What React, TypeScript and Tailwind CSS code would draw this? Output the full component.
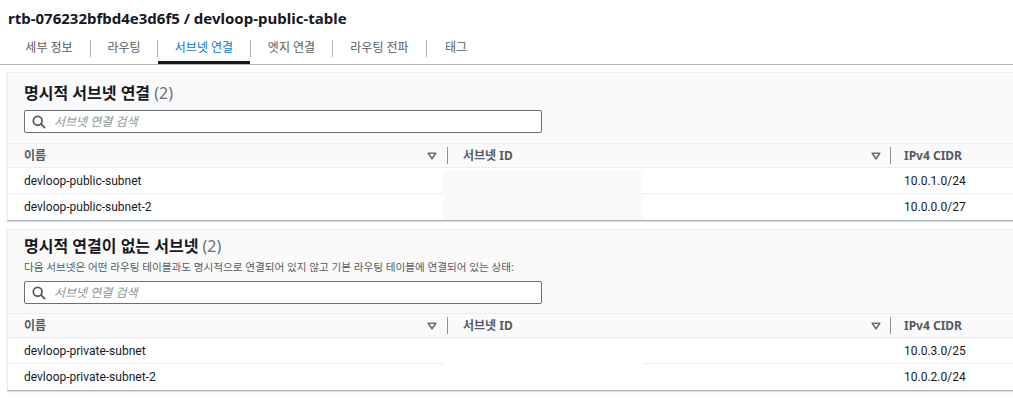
import React from "react";

const FONT = { fontFamily: '"Noto Sans", "Noto Sans CJK KR", sans-serif' };

function SortIcon() {
  return (
    <svg width="10" height="8" viewBox="0 0 10 8" className="shrink-0">
      <path d="M1.2 1.2 H8.8 L5 6.8 Z" fill="#ffffff" stroke="#687078" strokeWidth="1.6" strokeLinejoin="round" />
    </svg>
  );
}

function SearchIcon() {
  return (
    <svg width="14" height="14" viewBox="0 0 16 16" className="shrink-0">
      <circle cx="6.5" cy="6.5" r="5" fill="none" stroke="#545b64" strokeWidth="2" />
      <path d="M10.2 10.2 L14.5 14.5" stroke="#545b64" strokeWidth="2" strokeLinecap="round" />
    </svg>
  );
}

const tabs = [
  { label: "세부 정보", w: "w-[82px]" },
  { label: "라우팅", w: "w-[66px]" },
  { label: "서브넷 연결", w: "w-[92px]", active: true },
  { label: "엣지 연결", w: "w-[81px]" },
  { label: "라우팅 전파", w: "w-[93px]" },
  { label: "태그", w: "w-[58px]" },
];

function Search() {
  return (
    <div className="w-[518px] h-[23px] border border-[#687078] rounded-[2px] bg-white flex items-center pl-[7px] gap-[8px]">
      <SearchIcon />
      <span className="text-[12px] italic text-[#879596] leading-none">서브넷 연결 검색</span>
    </div>
  );
}

function Table({ rows, redact }: { rows: [string, string][]; redact: string }) {
  return (
    <div className="relative">
      <div className="grid grid-cols-[440px_443px_1fr] h-[25px] bg-[#fafafa] border-t border-[#eaeded] border-b text-[12px] font-bold text-[#545b64]">
        <div className="flex items-center pl-4">
          <span className="flex-1">이름</span>
          <SortIcon />
          <span className="w-[10px]" />
          <span className="w-px h-[17px] bg-[#879596]" />
        </div>
        <div className="flex items-center pl-[15px]">
          <span className="flex-1">서브넷 ID</span>
          <SortIcon />
          <span className="w-[9px]" />
          <span className="w-px h-[17px] bg-[#879596]" />
        </div>
        <div className="flex items-center pl-[13px]">
          <span>IPv4 CIDR</span>
        </div>
      </div>
      {rows.map(([name, cidr], i) => (
        <div
          key={name}
          className={
            "grid grid-cols-[440px_443px_1fr] h-[26px] bg-white text-[12px] text-[#16191f] font-[Roboto,'Noto_Sans',sans-serif] " +
            (i < rows.length - 1 ? "border-b border-[#eaeded]" : "")
          }
        >
          <div className="flex items-center pl-4">{name}</div>
          <div />
          <div className="flex items-center pl-[13px]">{cidr}</div>
        </div>
      ))}
      <div className={"absolute left-[435px] top-[27px] w-[200px] h-[50px] " + redact} />
    </div>
  );
}

export default function App() {
  return (
    <div className="w-[1013px] h-[408px] bg-white overflow-hidden" style={FONT}>
      <div className="pl-[8px] pt-[6px] h-[32px] text-[15px] leading-6 font-bold text-[#16191f]">
        rtb-076232bfbd4e3d6f5 / devloop-public-table
      </div>
      <div className="flex items-end h-[33px] pl-[8px] border-b border-[#aab7b8]">
        {tabs.map((t, i) => (
          <div key={t.label} className="flex items-center h-full">
            {i > 0 && <span className="w-px h-[17px] bg-[#aab7b8]" />}
            <div
              className={
                t.w +
                " h-full flex items-center justify-center text-[12px] border-b-[3px] " +
                (t.active ? "text-[#0972d3] border-[#16191f]" : "text-[#545b64] border-transparent")
              }
            >
              <span className="pt-[3px]">{t.label}</span>
            </div>
          </div>
        ))}
      </div>

      <div className="ml-[7px] mt-[7px] w-[1030px] border border-[#eaeded] border-b-[#aab7b8] shadow-[0_1px_1px_rgba(0,28,36,0.15)]">
        <div className="bg-[#fafafa] px-4 pt-[8px] pb-[10px]">
          <div className="text-[16px] font-bold text-[#16191f] leading-[24px] h-[29px]">
            명시적 서브넷 연결 <span className="font-normal text-[#687078]">(2)</span>
          </div>
          <Search />
        </div>
        <Table
          rows={[
            ["devloop-public-subnet", "10.0.1.0/24"],
            ["devloop-public-subnet-2", "10.0.0.0/27"],
          ]}
          redact="bg-[#fafafa]"
        />
      </div>

      <div className="ml-[7px] mt-[8px] w-[1030px] border border-[#eaeded] border-b-[#aab7b8] shadow-[0_1px_1px_rgba(0,28,36,0.15)]">
        <div className="bg-[#fafafa] px-4 pt-[4px] pb-[9px]">
          <div className="text-[16px] font-bold text-[#16191f] leading-[24px]">
            명시적 연결이 없는 서브넷 <span className="font-normal text-[#687078]">(2)</span>
          </div>
          <div className="text-[10.6px] text-[#545b64] leading-[16px] mt-[1px] mb-[6px]">
            다음 서브넷은 어떤 라우팅 테이블과도 명시적으로 연결되어 있지 않고 기본 라우팅 테이블에 연결되어 있는 상태:
          </div>
          <Search />
        </div>
        <Table
          rows={[
            ["devloop-private-subnet", "10.0.3.0/25"],
            ["devloop-private-subnet-2", "10.0.2.0/24"],
          ]}
          redact="bg-white"
        />
      </div>
    </div>
  );
}
